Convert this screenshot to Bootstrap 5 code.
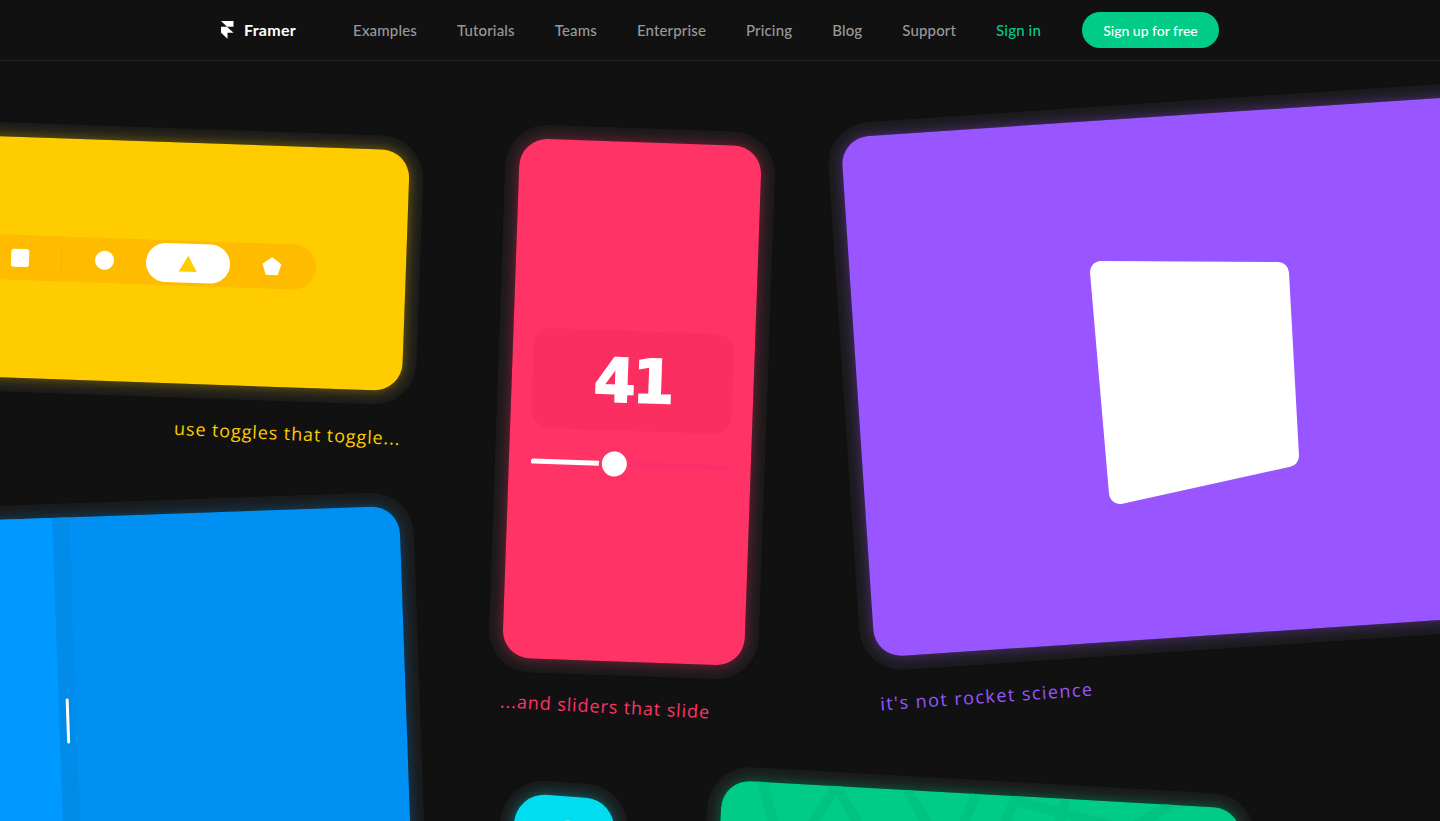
<!doctype html>
<html lang="en">
<head>
<meta charset="utf-8">
<title>Framer</title>
<link rel="stylesheet" href="https://cdn.jsdelivr.net/npm/bootstrap@5.3.0/dist/css/bootstrap.min.css">
<style>
html,body{height:100%;overflow:hidden}
body{background:#111;font-family:"Lato","Noto Sans",sans-serif;color:#fff}
.topbar{height:61px;border-bottom:1px solid #222;padding:0 0 0 220px;background:#111;position:relative;z-index:5}
.brand-name{font-weight:700;font-size:16px;letter-spacing:.3px;color:#fff;margin-left:9px;margin-right:57px;text-decoration:none}
.menu-link{font-size:15px;font-weight:500;letter-spacing:.15px;color:#999;text-decoration:none;margin-right:40px;white-space:nowrap}
.menu-link.accent{color:#0c8;margin-right:41px}
.join-btn{background:#0c8;color:#fff;font-size:14px;font-weight:500;width:137px;height:36px;border-radius:18px;border:0;padding:0;letter-spacing:0}
.stage{position:relative;height:760px;overflow:hidden}
.tile{position:absolute;border-radius:28px;--g:#fff}
.tile::after{content:"";position:absolute;inset:0;border-radius:inherit;pointer-events:none;box-shadow:0 0 14px 1px var(--g),0 0 0 14px rgba(255,255,255,.04)}
.tile-yellow{background:#fc0;--g:rgba(255,204,0,.38);left:-74px;top:81px;width:480px;height:241px;transform:rotate(2deg)}
.tile-pink{background:#f36;--g:rgba(255,51,102,.38);left:511px;top:81px;width:242px;height:520px;transform:rotate(2deg)}
.tile-purple{background:#95f;--g:rgba(153,85,255,.38);left:857px;top:51px;width:760px;height:521px;transform:rotate(-3.8deg)}
.tile-blue{background:#0090f3;--g:rgba(0,153,255,.32);left:-71px;top:453px;width:480px;height:560px;transform:rotate(-2deg)}
.tile-cyan{background:#0de;--g:rgba(0,221,238,.38);left:509px;top:735px;width:100px;height:200px;transform:rotate(4deg);border-radius:30px}
.tile-green{background:#0c8;--g:rgba(0,204,136,.38);left:715px;top:733px;width:520px;height:260px;transform:rotate(3.2deg)}
.switcher{height:45px;width:480px;margin-right:90px;border-radius:23px;background:#fb0;padding-right:34px}
.sw-square{width:18px;height:18px;border-radius:3px;background:#fff;margin-right:32px}
.sw-rule{width:1px;height:26px;background:#f5b400;margin-right:33px}
.sw-dot{width:19px;height:19px;border-radius:50%;background:#fff;margin-right:32px}
.sw-on{width:84px;height:39px;border-radius:20px;background:#fff;margin-right:32px}
.count-box{width:200px;height:100px;border-radius:18px;background:#fb2e61;font-family:"DejaVu Sans",sans-serif;font-weight:700;font-size:60px;line-height:1;color:#fff;-webkit-text-stroke:2px #fff;letter-spacing:-3px;margin-top:189px}
.range{height:5px;width:198px;margin-top:31px;background:#f9306a;border-radius:3px;position:relative}
.range-fill{height:5px;width:70px;background:#fff;border-radius:3px}
.range-thumb{position:absolute;left:71px;top:-10px;width:25px;height:25px;border-radius:50%;background:#fff;box-shadow:0 0 0 3px #f36}
.pull{width:133px;background:#09f;height:100%;border-radius:0}
.pull-band{width:17px;background:#008ce8;height:100%;padding-top:181px}
.pull-handle{width:3.5px;height:45px;background:#fff;border-radius:2px}
.note{position:absolute;font-size:18px;line-height:1;white-space:nowrap;font-family:"Open Sans",sans-serif;letter-spacing:.9px}
.note-y{color:#fc0;left:174px;top:363px;transform:rotate(2.6deg)}
.note-p{color:#f36;left:500px;top:636px;transform:rotate(3deg)}
.note-v{color:#95f;left:880px;top:626px;letter-spacing:1.45px;transform:rotate(-4deg)}
.freeform{position:absolute;left:0;top:-61px;width:1440px;height:821px;pointer-events:none}
.cyan-mark{position:absolute;left:46px;top:24px;width:16px;height:12px;border-radius:50%;background:#8ff0f4}
.map-lines{position:absolute;inset:0;width:100%;height:100%;border-radius:28px}
</style>
</head>
<body>
<nav class="topbar d-flex align-items-center">
  <svg width="15" height="18" viewBox="0 0 15 18" aria-hidden="true"><path fill="#fff" d="M1 0h12.500v5.700H7zM1 5.700h6l6.500 6H7.500v6L1 11.700z"/></svg>
  <a class="brand-name" href="#">Framer</a>
  <a class="menu-link" href="#">Examples</a>
  <a class="menu-link" href="#">Tutorials</a>
  <a class="menu-link" href="#">Teams</a>
  <a class="menu-link" href="#">Enterprise</a>
  <a class="menu-link" href="#">Pricing</a>
  <a class="menu-link" href="#">Blog</a>
  <a class="menu-link" href="#">Support</a>
  <a class="menu-link accent" href="#">Sign in</a>
  <button class="btn join-btn" type="button">Sign up for free</button>
</nav>
<main class="stage">
  <div class="tile tile-yellow d-flex align-items-center justify-content-end">
    <div class="switcher d-flex align-items-center justify-content-end flex-shrink-0">
      <span class="sw-square"></span><span class="sw-rule"></span><span class="sw-dot"></span>
      <span class="sw-on d-flex align-items-center justify-content-center"><svg width="20" height="18" viewBox="0 0 20 18"><path fill="#fc0" d="M10 1L19 17H1z"/></svg></span>
      <svg width="20" height="19" viewBox="0 0 20 19"><path fill="#fff" stroke="#fff" stroke-width="1.500" stroke-linejoin="round" d="M10 1.500L18.500 7.500 15.500 17.500H4.500L1.500 7.500z"/></svg>
    </div>
  </div>
  <div class="note note-y">use toggles that toggle...</div>

  <div class="tile tile-pink d-flex flex-column align-items-center">
    <div class="count-box d-flex align-items-center justify-content-center">41</div>
    <div class="range"><div class="range-fill"></div><div class="range-thumb"></div></div>
  </div>
  <div class="note note-p">...and sliders that slide</div>

  <div class="tile tile-purple"></div>
  <div class="note note-v">it's not rocket science</div>

  <div class="tile tile-blue d-flex">
    <div class="pull"></div>
    <div class="pull-band d-flex justify-content-center"><div class="pull-handle"></div></div>
  </div>

  <div class="tile tile-cyan"><span class="cyan-mark"></span></div>
  <div class="tile tile-green">
    <svg class="map-lines" viewBox="0 0 520 260" fill="none" stroke="#00c382" stroke-width="10" aria-hidden="true">
      <path d="M39 -4L62 70M91 40L114 0L140 40M184 0L212 40M254 0L240 40M294 0L280 40M295 5L395 25M344 0L335 40M450 0L410 25"/>
    </svg>
  </div>

  <svg class="freeform" viewBox="0 0 1440 821" aria-hidden="true"><path fill="#fff" stroke="#fff" stroke-width="22" stroke-linejoin="round" d="M1101 272L1278 273L1288 456L1120 493z"/></svg>
</main>
<script src="https://cdn.jsdelivr.net/npm/bootstrap@5.3.0/dist/js/bootstrap.bundle.min.js"></script>
</body>
</html>
